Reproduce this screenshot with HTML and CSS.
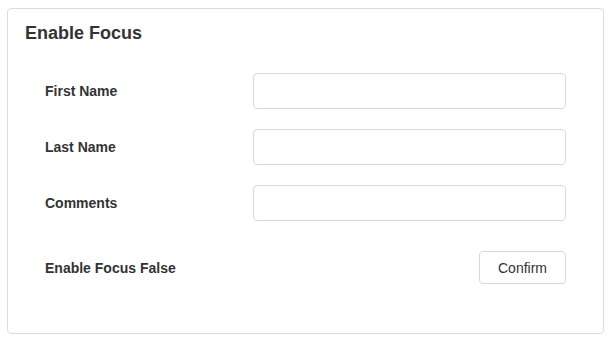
FILE: index.html
```html
<!DOCTYPE html>
<html>
<head>
<meta charset="utf-8">
<link rel="stylesheet" href="styles.css">
</head>
<body>
<div class="card">
  <h2 class="title">Enable Focus</h2>
  <div class="form">
    <div class="row">
      <label class="label">First Name</label>
      <input class="input" type="text">
    </div>
    <div class="row">
      <label class="label">Last Name</label>
      <input class="input" type="text">
    </div>
    <div class="row">
      <label class="label">Comments</label>
      <input class="input" type="text">
    </div>
    <div class="row row-action">
      <label class="label">Enable Focus False</label>
      <button class="btn" type="button">Confirm</button>
    </div>
  </div>
</div>
</body>
</html>
```
FILE: styles.css
```css
html, body {
  margin: 0;
  padding: 0;
  background: #ffffff;
}
body {
  font-family: "Liberation Sans", Arial, sans-serif;
  color: #333333;
}
.card {
  box-sizing: border-box;
  margin: 8px 0 0 7px;
  width: 597px;
  height: 326px;
  border: 1px solid #dcdcdc;
  border-radius: 4px;
  padding: 14px 37px 0 17px;
}
.title {
  margin: 0;
  font-size: 18px;
  font-weight: bold;
  line-height: 21px;
  color: #333333;
}
.form {
  display: flex;
  flex-direction: column;
  gap: 20px;
  margin-top: 29px;
  padding-left: 20px;
}
.row {
  display: flex;
  align-items: center;
  height: 36px;
}
.label {
  width: 208px;
  flex: none;
  font-size: 14px;
  font-weight: bold;
  color: #333333;
}
.input {
  box-sizing: border-box;
  width: 314px;
  height: 36px;
  border: 1px solid #d9d9d9;
  border-radius: 4px;
  background: #fff;
  margin: 0;
  padding: 0 10px;
  outline: none;
}
.row-action {
  margin-top: 10px;
  height: 33px;
  justify-content: space-between;
}
.btn {
  box-sizing: border-box;
  width: 87px;
  height: 33px;
  border: 1px solid #d9d9d9;
  border-radius: 4px;
  background: #fff;
  color: #333333;
  font-family: "Liberation Sans", Arial, sans-serif;
  font-size: 14px;
  padding: 0;
  margin: 0;
}
```
